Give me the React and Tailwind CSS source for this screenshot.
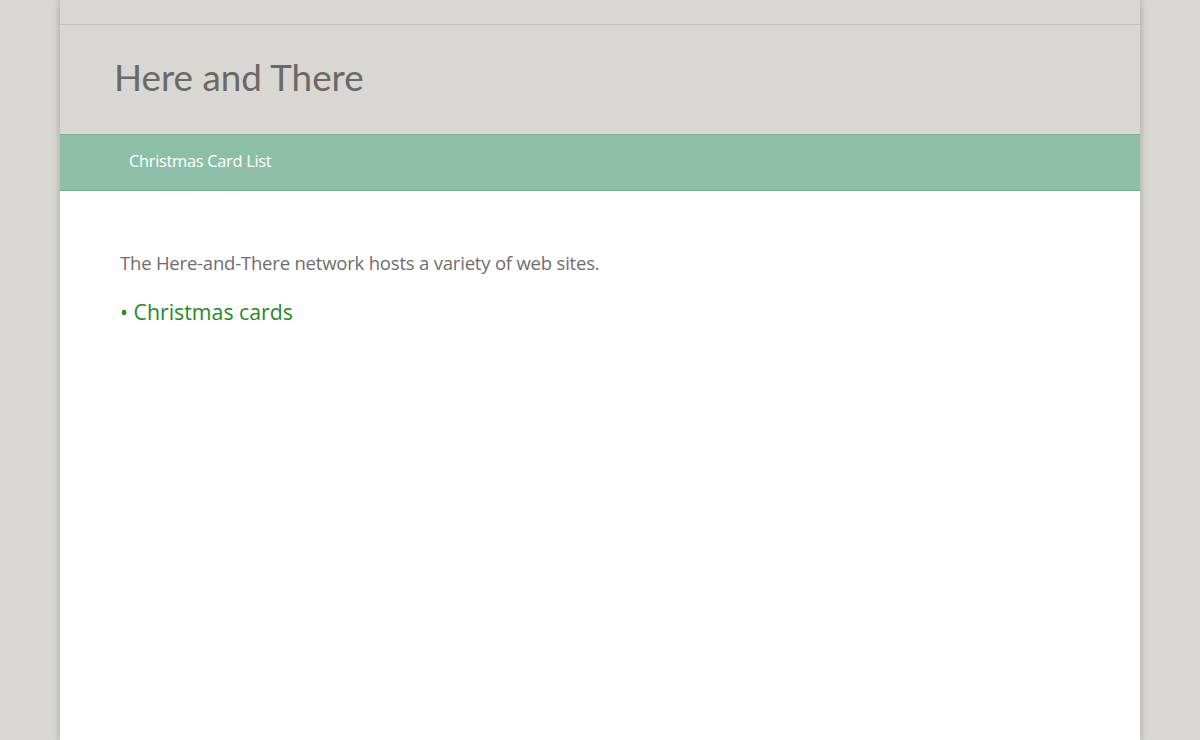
export default function App() {
  return (
    <div className="min-h-[740px] bg-[#d9d7d3]" style={{ fontFamily: '"Open Sans", "Noto Sans", sans-serif' }}>
      <div className="mx-auto w-[1080px] min-h-[740px] bg-white shadow-[0_0_8px_rgba(0,0,0,0.25)]">
        <div className="h-[25px] bg-[#d9d7d3] border-b border-[#c3c1bd]"></div>
        <div className="h-[109px] bg-[#d9d7d3] flex items-center pl-[54px]">
          <h1 className="text-[36.8px] text-[#6b6868] leading-none pb-[4px]" style={{ fontFamily: 'Lato, sans-serif' }}>Here and There</h1>
        </div>
        <div className="h-[57px] bg-[#8dbfa8] border-t border-[#7fae98] border-b border-b-[#7aa893] flex items-center pl-[69px] pb-[3px]">
          <span className="text-[16.4px] text-white tracking-[-0.3px]">Christmas Card List</span>
        </div>
        <div className="px-[60px] pt-[60px]">
          <p className="text-[18.5px] text-[#706c6c] tracking-[-0.2px] leading-[24px]">The Here-and-There network hosts a variety of web sites.</p>
          <p className="mt-[23px] text-[21.3px] text-[#268a26] leading-[28px]">• Christmas cards</p>
        </div>
      </div>
    </div>
  );
}
